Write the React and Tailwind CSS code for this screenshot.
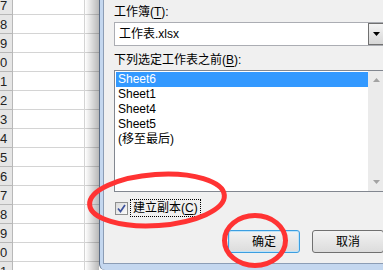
import React from 'react';

const rows = Array.from({ length: 15 }, (_, i) => 17 + i);
const sheets = ['Sheet6', 'Sheet1', 'Sheet4', 'Sheet5', '(移至最后)'];

function Spreadsheet() {
  return (
    <div className="relative w-[99px] shrink-0 overflow-hidden bg-white">
      <div className="-mt-[4px] flex flex-col">
        {rows.map((n) => (
          <div key={n} className="flex h-[19px] shrink-0">
            <div className="w-[13px] border-r border-b border-[#b8b8b8] bg-[#e6e6e6] pt-[3px] text-[13px] leading-[14px] text-[#222]">
              {n % 10}
            </div>
            <div className="w-[72px] border-r border-b border-[#d4d4d4]" />
            <div className="flex-1 border-b border-[#d4d4d4]" />
          </div>
        ))}
      </div>
      <div className="pointer-events-none absolute top-0 right-0 bottom-0 w-[14px] bg-linear-to-r from-transparent to-[rgba(0,0,0,0.28)]" />
    </div>
  );
}

function Underlined({ children }) {
  return <span className="underline underline-offset-2">{children}</span>;
}

function Dialog() {
  return (
    <div className="flex h-full w-[300px] shrink-0 flex-col rounded-bl-[6px] border-l border-[#5a6b83] bg-[#c4d7ef] pb-[6px] pl-[3px]">
      <div className="flex flex-1 flex-col border-b border-l border-[#8c9db5] bg-[#f0f0f0] pt-[4px] pl-[10px] text-[12px] text-black">
        <div className="h-[16px] leading-[16px]">
          工作簿(<Underlined>T</Underlined>):
        </div>

        <div className="mt-[2px] flex h-[24px] w-[272px] border border-[#abadb3] bg-white">
          <div className="flex-1 pl-[4px] leading-[22px]">工作表.xlsx</div>
          <div className="flex w-[17px] items-center justify-center border border-[#707070] bg-linear-to-b from-[#f4f4f4] to-[#d6d6d6]">
            <svg width="7" height="4" viewBox="0 0 7 4">
              <polygon points="0,0 7,0 3.5,4" fill="#000" />
            </svg>
          </div>
        </div>

        <div className="mt-[6px] h-[16px] leading-[16px]">
          下列选定工作表之前(<Underlined>B</Underlined>):
        </div>

        <div className="mt-[2px] flex h-[122px] w-[272px] border border-[#828790] bg-white">
          <div className="flex flex-1 flex-col pt-[1px] pl-[1px]">
            {sheets.map((s, i) => (
              <div
                key={s}
                className={
                  i === 0
                    ? 'h-[15px] bg-[#3399ff] pl-[2px] leading-[15px] text-white'
                    : 'h-[15px] pl-[2px] leading-[15px]'
                }
              >
                {s}
              </div>
            ))}
          </div>
          <div className="flex w-[17px] flex-col justify-between bg-[#ebebeb] py-[7px]">
            <div className="flex justify-center">
              <svg width="7" height="4" viewBox="0 0 7 4">
                <polygon points="3.5,0 7,4 0,4" fill="#a3a3a3" />
              </svg>
            </div>
            <div className="flex justify-center">
              <svg width="7" height="4" viewBox="0 0 7 4">
                <polygon points="0,0 7,0 3.5,4" fill="#a3a3a3" />
              </svg>
            </div>
          </div>
        </div>

        <div className="mt-[7px] flex h-[18px] items-center">
          <div className="ml-[1px] flex h-[13px] w-[13px] items-center justify-center border border-[#8e8f8f] bg-linear-to-br from-[#dadada] to-[#fbfbfb]">
            <svg width="9" height="9" viewBox="0 0 9 9">
              <path d="M1 4.5 L3.5 7.5 L8 1" fill="none" stroke="#3c519c" strokeWidth="1.7" />
            </svg>
          </div>
          <div className="ml-[2px] h-[18px] border border-dotted border-black px-[2px] leading-[16px]">
            建立副本(<Underlined>C</Underlined>)
          </div>
        </div>

        <div className="mt-[13px] ml-[114px] flex gap-[12px]">
          <button className="h-[23px] w-[72px] rounded-[3px] border border-[#3c9ee0] bg-linear-to-b from-[#f2f2f2] to-[#dcdcdc] text-[12px] shadow-[inset_0_0_0_1px_#bfe3f8]">
            确定
          </button>
          <button className="h-[23px] w-[72px] rounded-[3px] border border-[#707070] bg-linear-to-b from-[#f2f2f2] to-[#dcdcdc] text-[12px]">
            取消
          </button>
        </div>
      </div>
    </div>
  );
}

export default function App() {
  return (
    <div className="relative flex h-[270px] w-[383px] overflow-hidden bg-white font-['Liberation_Sans','Noto_Sans_CJK_SC',sans-serif]">
      <Spreadsheet />
      <Dialog />
      <svg className="pointer-events-none absolute inset-0" width="383" height="270" viewBox="0 0 383 270">
        <ellipse cx="157" cy="200" rx="67.5" ry="25.5" fill="none" stroke="#ff3333" strokeWidth="5" transform="rotate(-4 157 200)" />
        <ellipse cx="255" cy="240.5" rx="30.5" ry="25" fill="none" stroke="#ff3333" strokeWidth="5" />
      </svg>
    </div>
  );
}
